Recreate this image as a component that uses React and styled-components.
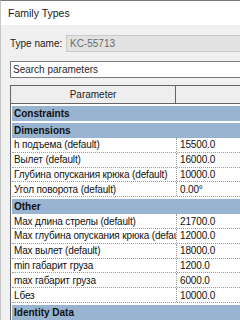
import React from 'react'
import styled, { createGlobalStyle } from 'styled-components'

const Global = createGlobalStyle`
  html, body {
    margin: 0;
    padding: 0;
    background: #f0f0f0;
  }
  * {
    box-sizing: border-box;
  }
`

const Window = styled.div`
  width: 240px;
  height: 320px;
  overflow: hidden;
  background: #f0f0f0;
  border-top: 1px solid #7a7a7a;
  border-left: 1px solid #c4c4c4;
  font-family: "Liberation Sans", Arial, sans-serif;
  color: #111;
`

const TitleBar = styled.div`
  height: 24px;
  background: #fff;
  display: flex;
  align-items: center;
  padding-left: 7px;
  font-size: 10.5px;
  color: #1a1a1a;
`

const Body = styled.div`
  padding: 10px 0 0 9px;
`

const TypeRow = styled.div`
  display: flex;
  align-items: center;
  height: 17px;
`

const Label = styled.span`
  width: 56px;
  flex-shrink: 0;
  white-space: nowrap;
  font-size: 10px;
  color: #222;
`

const Field = styled.div`
  flex: 1;
  height: 17px;
  display: flex;
  align-items: center;
  padding-left: 3px;
  background: #e2e2e2;
  border: 1px solid #cacaca;
  border-right: none;
  font-size: 10px;
  color: #6a6a6a;
`

const Search = styled.div`
  margin-top: 9px;
  height: 17px;
  display: flex;
  align-items: center;
  padding-left: 2px;
  background: #fff;
  border: 1px solid #7a7a7a;
  border-right: none;
  font-size: 10px;
  color: #2a2a2a;
`

const Grid = styled.div`
  margin-top: 7px;
  border-left: 1px solid #646464;
  border-top: 1px solid #646464;
  background: #fff;
  padding-left: 1px;
  width: 300px;
`

const Header = styled.div`
  display: grid;
  grid-template-columns: 165px 1fr;
  height: 18px;
  margin-left: -1px;
  background: #eeeeee;
  border-bottom: 1px solid #646464;
  font-size: 10px;
  color: #222;
`

const HeaderCell = styled.div`
  display: flex;
  align-items: center;
  justify-content: center;
  border-right: ${p => (p.$divider ? '1px solid #646464' : 'none')};
`

const Group = styled.div`
  margin-top: 2px;
  height: 15px;
  display: flex;
  align-items: center;
  padding-left: 2px;
  background: #99b4d1;
  font-size: 10px;
  font-weight: 700;
  color: #111;
`

const Row = styled.div`
  display: grid;
  grid-template-columns: 164px 1fr;
  height: 14.8px;
  border-bottom: 1px dotted #9a9a9a;
  font-size: 10px;
  letter-spacing: -0.15px;
  color: #111;
`

const Cell = styled.div`
  min-width: 0;
  display: flex;
  align-items: center;
  padding-left: ${p => (p.$value ? '3px' : '2px')};
  white-space: nowrap;
  overflow: hidden;
  border-left: ${p => (p.$value ? '1px dotted #9a9a9a' : 'none')};
`

const sections = [
  { title: 'Constraints' },
  {
    title: 'Dimensions',
    rows: [
      ['h подъема (default)', '15500.0'],
      ['Вылет (default)', '16000.0'],
      ['Глубина опускания крюка (default)', '10000.0'],
      ['Угол поворота (default)', '0.00°'],
    ],
  },
  {
    title: 'Other',
    rows: [
      ['Max длина стрелы (default)', '21700.0'],
      ['Max глубина опускания крюка (default)', '12000.0'],
      ['Max вылет (default)', '18000.0'],
      ['min габарит груза', '1200.0'],
      ['max габарит груза', '6000.0'],
      ['Lбез', '10000.0'],
    ],
  },
  { title: 'Identity Data' },
]

export default function App() {
  return (
    <Window>
      <Global />
      <TitleBar>Family Types</TitleBar>
      <Body>
        <TypeRow>
          <Label>Type name:</Label>
          <Field>KC-55713</Field>
        </TypeRow>
        <Search>Search parameters</Search>
        <Grid>
          <Header>
            <HeaderCell $divider>Parameter</HeaderCell>
            <HeaderCell />
          </Header>
          {sections.map(s => (
            <React.Fragment key={s.title}>
              <Group>{s.title}</Group>
              {(s.rows || []).map(([name, value]) => (
                <Row key={name}>
                  <Cell>{name}</Cell>
                  <Cell $value>{value}</Cell>
                </Row>
              ))}
            </React.Fragment>
          ))}
        </Grid>
      </Body>
    </Window>
  )
}
